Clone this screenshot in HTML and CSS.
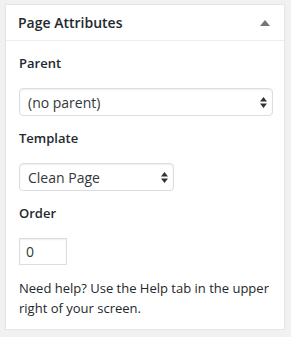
FILE: index.html
```html
<!DOCTYPE html>
<html>
<head>
<meta charset="utf-8">
<link rel="stylesheet" href="styles.css">
</head>
<body>
<div class="postbox">
  <div class="hndle">
    <h2 class="title">Page Attributes</h2>
    <svg class="toggle" width="10" height="6" viewBox="0 0 10 6"><path d="M5 0 L10 6 L0 6 Z" fill="#72777c"/></svg>
  </div>
  <div class="inside">
    <p class="label">Parent</p>
    <select class="sel sel-wide"><option>(no parent)</option></select>
    <p class="label">Template</p>
    <select class="sel sel-narrow"><option>Clean Page</option></select>
    <p class="label">Order</p>
    <input class="order" type="text" value="0">
    <p class="help">Need help? Use the Help tab in the upper right of your screen.</p>
  </div>
</div>
</body>
</html>
```
FILE: styles.css
```css
html, body {
  margin: 0;
  padding: 0;
  background: #f1f1f1;
}
body {
  padding: 4px 6px 0 5px;
  font-family: "Open Sans", "Noto Sans", sans-serif;
  font-size: 13px;
  color: #444;
}
.postbox {
  background: #fff;
  border: 1px solid #e5e5e5;
  box-shadow: 0 1px 1px rgba(0,0,0,.04);
}
.hndle {
  display: flex;
  align-items: center;
  justify-content: space-between;
  height: 35px;
  padding: 0 12px;
  border-bottom: 1px solid #eee;
}
.title {
  margin: 0;
  font-size: 14px;
  font-weight: 600;
  color: #23282d;
  line-height: 20px;
}
.toggle {
  display: block;
  margin-right: 2px;
}
.inside {
  display: flex;
  flex-direction: column;
  align-items: flex-start;
  padding: 0 11px 11px 13px;
}
.label {
  margin: 12px 0 15px;
  font-weight: 600;
  line-height: 20px;
  color: #23282d;
}
.sel {
  -webkit-appearance: none;
  appearance: none;
  height: 28px;
  margin: 0;
  padding: 0 20px 0 8px;
  font-family: "Open Sans", "Noto Sans", sans-serif;
  font-size: 14px;
  color: #32373c;
  border: 1px solid #ddd;
  border-radius: 4px;
  box-shadow: inset 0 1px 2px rgba(0,0,0,.07);
  background: #fff url("data:image/svg+xml;utf8,<svg xmlns='http://www.w3.org/2000/svg' width='7' height='11' viewBox='0 0 7 11'><path d='M3.5 0 L7 4.5 L0 4.5 Z M3.5 11 L7 6.5 L0 6.5 Z' fill='%23333'/></svg>") no-repeat right 5px center;
}
.sel-wide { width: 254px; }
.sel-narrow { width: 155px; }
.order {
  width: 48px;
  height: 27px;
  box-sizing: border-box;
  margin: 0;
  padding: 0 6px;
  font-family: "Open Sans", "Noto Sans", sans-serif;
  font-size: 14px;
  color: #32373c;
  border: 1px solid #ddd;
  border-radius: 0;
  box-shadow: inset 0 1px 2px rgba(0,0,0,.07);
}
.help {
  margin: 13px 0 0;
  line-height: 20px;
  color: #23282d;
}
```
